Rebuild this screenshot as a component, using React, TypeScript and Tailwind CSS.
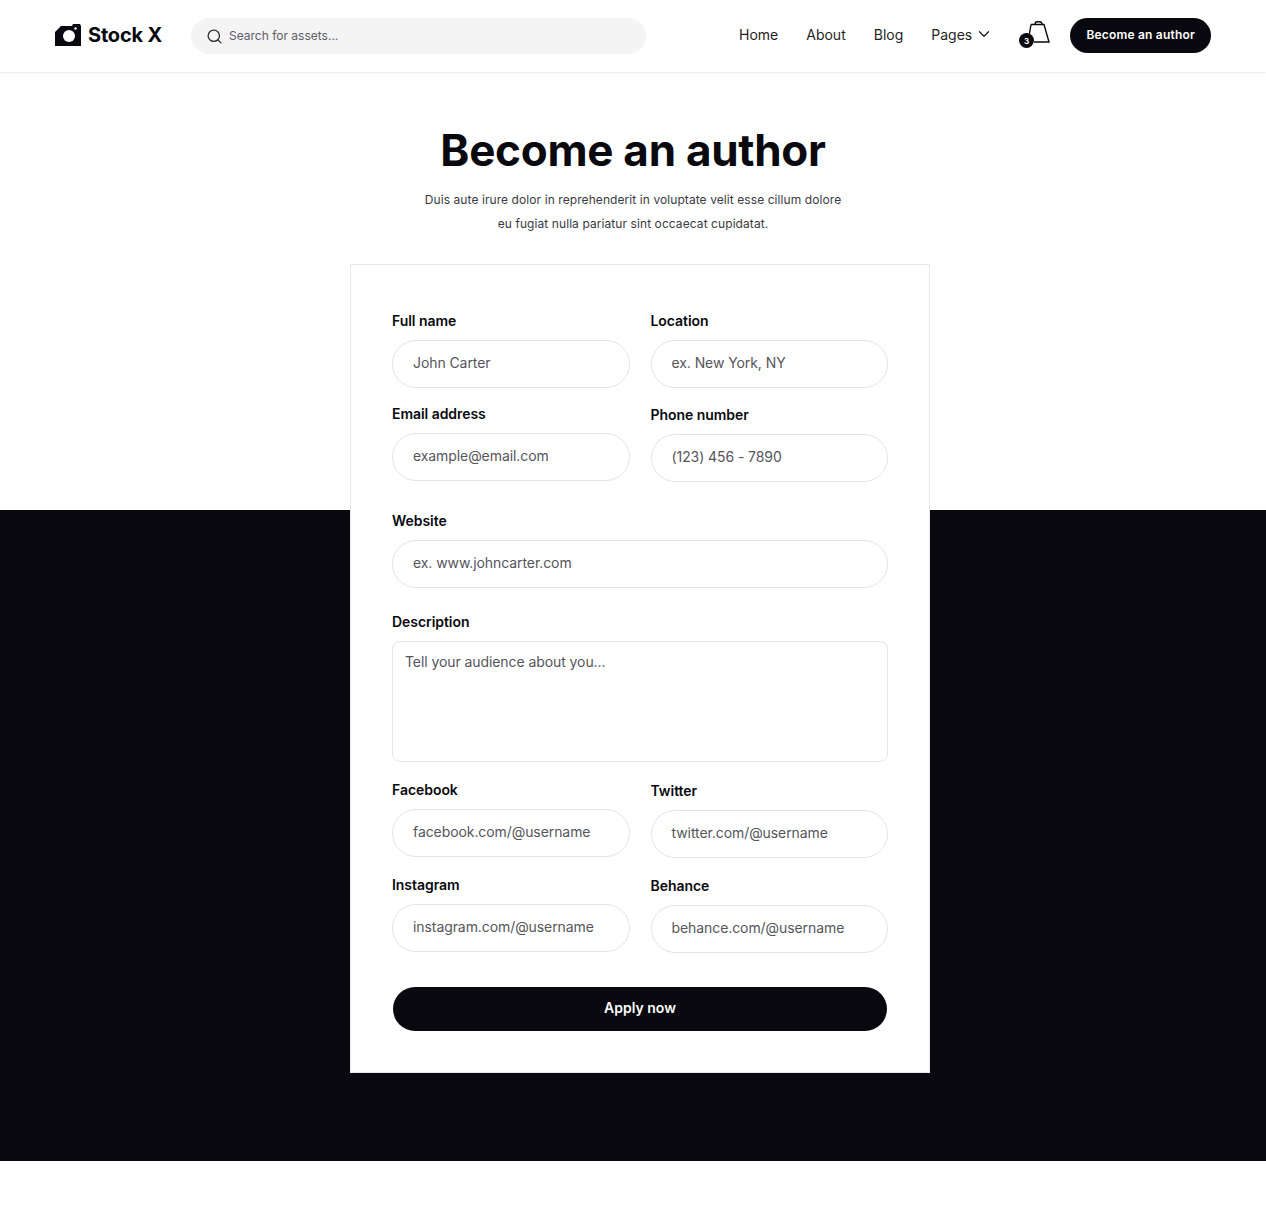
import React from "react";
import { ChevronDown, Search } from "lucide-react";

const font = "font-['Inter','Liberation_Sans',sans-serif]";

function Field({ label, placeholder, className = "" }: { label: string; placeholder: string; className?: string }) {
  return (
    <div className={`flex flex-col ${className}`}>
      <label className="text-[14px] leading-[20px] font-semibold text-[#09090f] mb-[9px] tracking-[-0.05px] mt-[-1px]">{label}</label>
      <div className="h-[48px] rounded-full border border-[#e4e4e7] bg-white pl-[20px] pb-[3px] flex items-center text-[14px] text-[#55555c] tracking-[-0.08px]">
        {placeholder}
      </div>
    </div>
  );
}

export default function App() {
  return (
    <div className={`${font} bg-white w-[1266px] h-[1206px] flex flex-col text-[#09090f] overflow-hidden`}>
      <header className="h-[73px] shrink-0 flex items-center pl-[55px] pr-[55px] pb-[2px] border-b border-[#f1f1f3] shadow-[0_1px_3px_rgba(0,0,0,0.03)]">
        <div className="flex items-center w-[136px] shrink-0">
          <svg width="27" height="22" viewBox="0 0 27 22" className="mr-[6px]">
            <path d="M0 8 L6 2 L17 2 L18 0 L25 0 L26 2 L26 22 L0 22 Z" fill="#09090f" />
            <circle cx="14" cy="12" r="6" fill="#ffffff" />
            <circle cx="20.5" cy="4.5" r="1.2" fill="#ffffff" />
          </svg>
          <span className="text-[20px] font-bold tracking-[-0.2px]">Stock X</span>
        </div>
        <div className="shrink-0 w-[455px] h-[36px] mt-[2px] rounded-full bg-[#f4f4f5] flex items-center pl-[15px]">
          <Search size={17} strokeWidth={1.8} className="text-[#2a2a30]" />
          <span className="ml-[6px] text-[12px] text-[#5e5e66]">Search for assets...</span>
        </div>
        <nav className="shrink-0 ml-[93px] mb-[2px] flex items-center text-[14px] text-[#1f1f25]">
          <span>Home</span>
          <span className="ml-[28px]">About</span>
          <span className="ml-[28px]">Blog</span>
          <span className="ml-[28px]">Pages</span>
          <ChevronDown size={18} strokeWidth={1.75} className="ml-[3px]" />
        </nav>
        <div className="relative shrink-0 ml-[26px] w-[32px] h-[30px]">
          <svg width="22" height="24" viewBox="0 0 22 24" className="absolute left-[10px] top-[1px]" fill="none" stroke="#09090f" strokeWidth="1.4">
            <path d="M2 3.5 L15 3.5 L20 21 L5 21" />
            <path d="M2 3.5 L0 15" />
            <path d="M6 3.5 Q6 0.7 8 0.7 L11 0.7 Q13 0.7 13 3.5" />
          </svg>
          <span className="absolute left-0 top-[13px] w-[15px] h-[15px] rounded-full bg-[#09090f] text-white text-[8px] font-bold flex items-center justify-center">3</span>
        </div>
        <button className="shrink-0 ml-[19px] h-[35px] w-[141px] rounded-full bg-[#09090f] text-white text-[12px] font-semibold tracking-[0.19px]">Become an author</button>
      </header>

      <div className="flex-1 flex flex-col relative">
        <div className="h-[437px] shrink-0 flex flex-col items-center">
          <h1 className="mt-[47px] text-[44px] leading-[60px] font-bold tracking-[-0.28px]">Become an author</h1>
          <p className="mt-[8px] text-[12px] leading-[24px] text-[#3a3a42] text-center tracking-[0.08px]">
            Duis aute irure dolor in reprehenderit in voluptate velit esse cillum dolore
            <br />
            eu fugiat nulla pariatur sint occaecat cupidatat.
          </p>
        </div>
        <div className="h-[651px] shrink-0 bg-[#09090f] flex justify-start">
          <div className="relative z-10 ml-[350px] mt-[-246px] w-[580px] h-[809px] shrink-0 bg-white border border-[#e8e8ea] px-[41px] pt-[47px]">
            <div className="grid grid-cols-2 gap-x-[21px]">
              <Field label="Full name" placeholder="John Carter" />
              <Field label="Location" placeholder="ex. New York, NY" />
            </div>
            <div className="grid grid-cols-2 gap-x-[21px] mt-[17px]">
              <Field label="Email address" placeholder="example@email.com" />
              <Field label="Phone number" placeholder="(123) 456 - 7890" className="mt-[1px]" />
            </div>
            <Field label="Website" placeholder="ex. www.johncarter.com" className="mt-[30px]" />
            <div className="flex flex-col mt-[25px]">
              <label className="text-[14px] leading-[20px] font-semibold mb-[9px] tracking-[-0.05px] mt-[-1px]">Description</label>
              <div className="h-[121px] rounded-[8px] border border-[#e4e4e7] px-[12px] pt-[10px] text-[14px] leading-[20px] text-[#55555c] tracking-[-0.08px]">
                Tell your audience about you...
              </div>
            </div>
            <div className="grid grid-cols-2 gap-x-[21px] mt-[19px]">
              <Field label="Facebook" placeholder="facebook.com/@username" />
              <Field label="Twitter" placeholder="twitter.com/@username" className="mt-[1px]" />
            </div>
            <div className="grid grid-cols-2 gap-x-[21px] mt-[18px]">
              <Field label="Instagram" placeholder="instagram.com/@username" />
              <Field label="Behance" placeholder="behance.com/@username" className="mt-[1px]" />
            </div>
            <button className="mt-[34px] ml-[1px] w-[494px] h-[44px] rounded-full bg-[#09090f] text-white text-[14px] font-semibold flex items-center justify-center pb-[3px]">Apply now</button>
          </div>
        </div>
        <div className="flex-1 bg-white" />
      </div>
    </div>
  );
}
